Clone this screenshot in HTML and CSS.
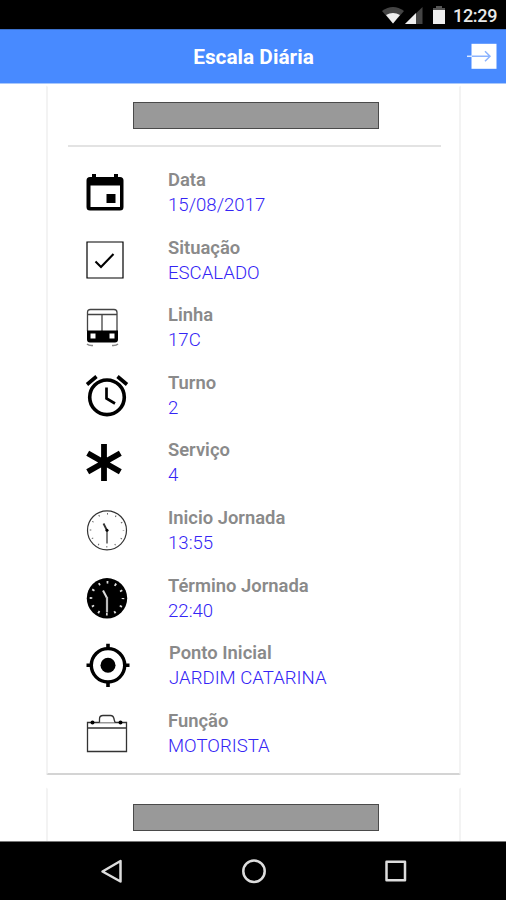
FILE: index.html
```html
<!DOCTYPE html>
<html lang="pt-BR">
<head>
<meta charset="utf-8">
<title>Escala Diária</title>
<link rel="stylesheet" href="styles.css">
</head>
<body>
<div class="status">
  <svg class="status-icons" width="66" height="30" viewBox="0 0 66 30">
    <path d="M0 11Q11 3 22 11L11 23.500Z" fill="#444"/><path d="M4 15Q11 11 18 15L11 23.500Z" fill="#eee"/>
    <path d="M23 24L40.500 7V24Z" fill="#444"/><path d="M23 24L34 13V24Z" fill="#eee"/>
    <path d="M51 8h3V6h6v2h3v3H51Z" fill="#555"/><path d="M51 10h12v14H51Z" fill="#eee"/>
  </svg>
  <span class="time">12:29</span>
</div>
<header class="bar">
  <h1>Escala Diária</h1>
  <svg class="exit" width="32" height="28" viewBox="0 0 32 28"><path d="M5.500 .8h25v25h-25z" fill="#fff"/><path d="M1 13.300h5" stroke="#dce8ff" stroke-width="1.500"/><path d="M6 13.300h18M19 8.300l5 5-5 5" fill="none" stroke="#8cb4ff" stroke-width="1.500"/></svg>
</header>
<main class="content">
  <section class="card">
    <div class="name"></div>
    <hr>
    <ul class="rows">
      <li><svg class="icon" viewBox="0 0 48 48"><path fill-rule="evenodd" d="M8 4h4v3h18V4h4v3h2q3.500 0 3.500 3.500v26.500q0 3.500-3.500 3.500H6q-3.500 0-3.500-3.500V10.500Q2.500 7 6 7h2ZM6.500 15.500V37h29.500V15.500Z"/><path d="M22.500 24h9v9h-9z"/></svg><div><b>Data</b><span>15/08/2017</span></div></li>
      <li><svg class="icon" viewBox="0 0 48 48"><g fill="none" stroke="#000"><path d="M3 4h36v36H3z" stroke-width="1.200"/><path d="M11.500 23.500l5.500 5.500L29.500 16" stroke-width="2.100"/></g></svg><div><b>Situação</b><span>ESCALADO</span></div></li>
      <li><svg class="icon" viewBox="0 0 48 48"><path d="M3.500 26V7.500q0-3 3-3H30q3 0 3 3V26M3.500 9.500h29.500M18 9.500V26" fill="none" stroke="#444" stroke-width="1.300"/><path fill-rule="evenodd" d="M3 25.500h31v9q0 3-3 3H6q-3 0-3-3ZM6.500 28.500v5h5v-5ZM25.500 28.500v5h5v-5Z"/><path d="M3 39q2 2 6 1.500M34 39q-2 2-6 1.500" fill="none" stroke="#888" stroke-width="1.500"/></svg><div><b>Linha</b><span>17C</span></div></li>
      <li><svg class="icon" viewBox="0 0 48 48"><g fill="none" stroke="#000" stroke-width="3.600"><circle cx="23" cy="24.300" r="17.300"/><path d="M3 11.500l9.500-8M43 11.500l-9.500-8"/><path d="M22.500 14.500v11l8.500 5" stroke-width="2.700"/></g></svg><div><b>Turno</b><span>2</span></div></li>
      <li><svg class="icon" viewBox="0 0 48 48"><path d="M20 4v37M3.700 13.200L36.300 31.800M36.300 13.200L3.700 31.800" stroke="#000" stroke-width="5.800"/></svg><div><b>Serviço</b><span>4</span></div></li>
      <li><svg class="icon" viewBox="0 0 48 48"><circle cx="23" cy="22.300" r="19.500" fill="none" stroke="#333" stroke-width="1.200"/><circle cx="23" cy="22.300" r="16.500" fill="none" stroke="#666" stroke-width="1.600" stroke-dasharray="1 7.639" stroke-dashoffset=".5"/><path d="M19.500 15.500l3.500 7" stroke="#333" stroke-width="1.800"/><path d="M23 22v13.500" stroke="#555" stroke-width="1.500"/><circle cx="23" cy="22.300" r="1.500"/></svg><div><b>Inicio Jornada</b><span>13:55</span></div></li>
      <li><svg class="icon" viewBox="0 0 48 48"><circle cx="23" cy="22.300" r="20.200"/><circle cx="23" cy="22.300" r="16" fill="none" stroke="#ddd" stroke-width="2.600" stroke-dasharray="1.800 6.578" stroke-dashoffset=".9"/><path d="M19 14.500l4 7.500" stroke="#ddd" stroke-width="2"/><path d="M23 21v15.500" stroke="#bbb" stroke-width="2.200"/></svg><div><b>Término Jornada</b><span>22:40</span></div></li>
      <li><svg class="icon" viewBox="0 0 48 48"><circle cx="24" cy="22.300" r="16.700" fill="none" stroke="#000" stroke-width="3.400"/><circle cx="24" cy="22.300" r="7.500"/><path d="M24 .8v6M24 38v6M2.500 22.300h6M39.500 22.300h6" stroke="#000" stroke-width="3.600"/></svg><div class="nudge"><b>Ponto Inicial</b><span>JARDIM CATARINA</span></div></li>
      <li><svg class="icon" viewBox="0 0 48 48"><path d="M3.500 11.500h39v29h-39zM3.500 17h39" fill="none" stroke="#333" stroke-width="1.300"/><path d="M15.500 11.500V8q0-3.500 3.500-3.500h7.500q3 0 3.500 3.500l1 3.500" fill="#fff" stroke="#333" stroke-width="1.300"/><circle cx="8.500" cy="11.500" r="2"/><circle cx="36.500" cy="11.500" r="2"/></svg><div><b>Função</b><span>MOTORISTA</span></div></li>
    </ul>
  </section>
  <section class="card">
    <div class="name"></div>
    <hr>
  </section>
</main>
<nav class="nav">
  <svg width="26" height="26" viewBox="0 0 26 26"><path d="M3.500 13.500L21.500 3v20.500Z"/></svg>
  <svg width="26" height="26" viewBox="0 0 26 26"><circle cx="13" cy="13.300" r="10.700"/></svg>
  <svg width="26" height="26" viewBox="0 0 26 26"><path d="M3.500 3.700h18.500v18.500H3.500z"/></svg>
</nav>
</body>
</html>
```
FILE: styles.css
```css
* { box-sizing: border-box; }

body {
  margin: 0;
  height: 900px;
  display: flex;
  flex-direction: column;
  overflow: hidden;
  background: #fff;
  font-family: Roboto, "Liberation Sans", sans-serif;
}

.status {
  flex: none;
  height: 29px;
  padding-right: 9px;
  display: flex;
  justify-content: flex-end;
  align-items: center;
  gap: 5px;
  background: #000;
  color: #e8e8e8;
}

.time {
  width: 44px;
  padding-top: 3px;
  font-size: 18px;
  font-weight: 500;
  line-height: 26px;
  letter-spacing: -0.3px;
}

.bar {
  flex: none;
  height: 55px;
  padding: 0 8px 0 42px;
  display: flex;
  align-items: center;
  background: #488aff;
  border-top: 1px solid #3c70ca;
  border-bottom: 1px solid #a9c8fb;
}

h1 {
  flex: 1;
  margin: 0;
  padding-right: 1px;
  text-align: center;
  color: #fff;
  font-size: 20.8px;
  font-weight: 700;
  line-height: 24px;
}

.content {
  flex: 1;
  min-height: 0;
  overflow: hidden;
  padding: 0 45px 0 46px;
}

.card {
  height: 690px;
  margin: 1px 0 12px;
  padding: 15px 18px 0 20px;
  border: 2px solid #f3f3f3;
  border-top-color: #fff;
  border-bottom-color: #d4d4d4;
  border-radius: 2px;
}

.name {
  width: 246px;
  height: 27px;
  margin-left: 65px;
  background: #999;
  border: 1px solid #4a4a4a;
}

hr {
  height: 2px;
  margin: 16px 0 0;
  border: 0;
  background: #e3e3e3;
}

.rows {
  margin: 0;
  padding: 23px 0 0 16px;
  list-style: none;
}

.rows li {
  height: 67.6px;
  display: flex;
  gap: 36px;
}

.icon {
  width: 48px;
  height: 48px;
  flex: none;
}

.nudge { padding-left: 1px; }

.rows b, .rows span {
  display: block;
  white-space: nowrap;
  line-height: 24px;
}

.rows b {
  margin-top: -2px;
  color: #8a8a8a;
  font-size: 18.4px;
  font-weight: 600;
}

.rows span {
  margin-top: 1px;
  color: #3424f5;
  font-size: 18.6px;
  font-weight: 350;
}

.nav {
  flex: none;
  height: 59px;
  padding: 16px 97px 0 99px;
  display: flex;
  justify-content: space-between;
  background: #000;
  border-top: 1px solid #777;
}

.nav svg {
  fill: none;
  stroke: #ddd;
  stroke-width: 2.5px;
  stroke-linejoin: round;
}
```
